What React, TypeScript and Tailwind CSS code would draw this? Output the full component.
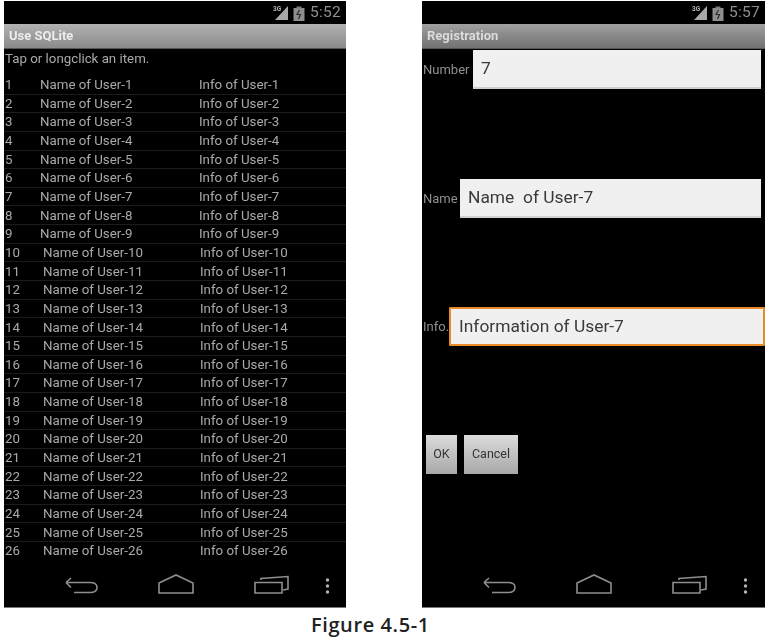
const font = "font-['Roboto',sans-serif]";

function StatusBar({ time }: { time: string }) {
  return (
    <div className="h-[23px] flex items-center justify-end pr-[5px] gap-[5px]">
      <svg width="32" height="18" viewBox="0 0 32 18">
        <text x="0" y="7" fontSize="6.500" fontWeight="700" fill="#b5b5b5" fontFamily="Roboto, sans-serif">3G</text>
        <path d="M2 16 L15 16 L15 2 Z" fill="#a8a8a8" />
        <rect x="20.500" y="4" width="11" height="13" fill="#8e8e8e" />
        <rect x="23.500" y="2.500" width="5" height="2" fill="#7c7c7c" />
        <path d="M26.500 6 L24 10.500 L27.500 10.500 L25.500 15" stroke="#2a2a2a" strokeWidth="1.200" fill="none" />
      </svg>
      <span className="text-[15.500px] leading-none text-[#8f8f8f] tracking-[0.3px]">{time}</span>
    </div>
  );
}

function TitleBar({ title, light }: { title: string; light?: boolean }) {
  return (
    <div
      className={
        light
          ? "h-[25px] bg-gradient-to-b from-[#b2b2b2] to-[#8a8a8a] border-b border-[#555] flex items-center pl-[5px] text-[13px] font-bold text-[#ececec]"
          : "h-[25px] bg-gradient-to-b from-[#a0a0a0] to-[#727272] border-b border-[#555] flex items-center pl-[5px] text-[13px] font-bold text-[#dcdcdc]"
      }
    >
      {title}
    </div>
  );
}

function NavBar() {
  return (
    <div className="mt-auto h-[38px] relative shrink-0">
      <svg width="343" height="38" viewBox="0 0 343 38" fill="none" stroke="#8e8e8e" strokeWidth="1.600">
        <path d="M62 13.500 L67 9 M62 13.500 L67 18.500 M62 13.500 L86 13.500 Q93 13.500 93 18.500 Q93 23.500 86 23.500 L70 23.500" />
        <path d="M155 14 L172 6 L189 14 L189 24 L155 24 Z" />
        <path d="M251 13.500 L278 13.500 L278 24 L251 24 Z" />
        <path d="M257 11 L257 9.500 L284 7.500 L284 20 L279 21" />
        <circle cx="323.500" cy="11" r="1.700" fill="#b5b5b5" stroke="none" />
        <circle cx="323.500" cy="17" r="1.700" fill="#b5b5b5" stroke="none" />
        <circle cx="323.500" cy="23" r="1.700" fill="#b5b5b5" stroke="none" />
      </svg>
    </div>
  );
}

function ListRow({ n }: { n: number }) {
  const two = n >= 10;
  return (
    <div className="h-[18.650px] shrink-0 flex items-center border-b border-[#1c1c1c] text-[13.300px] leading-none text-[#a9a9a9]">
      <span className={two ? "w-[39px] pl-px" : "w-[36px] pl-px"}>{n}</span>
      <span className={two ? "w-[157px]" : "w-[159px]"}>Name of User-{n}</span>
      <span>Info of User-{n}</span>
    </div>
  );
}

function Field({ label, value, labelW, top, focused }: { label: string; value: string; labelW: string; top: string; focused?: boolean }) {
  return (
    <div className={`flex items-center ${top}`}>
      <span className={`${labelW} shrink-0 text-[13px] text-[#8f8f8f] leading-none`}>{label}</span>
      <div
        className={
          focused
            ? "flex-1 h-[39px] bg-[#f0f0f0] border-2 border-[#e8892a] rounded-[1px] flex items-center pl-[8px] text-[17.400px] text-[#3a3a3a]"
            : "flex-1 mr-[4px] h-[39px] bg-[#f0f0f0] border-b-2 border-[#d0d0d0] flex items-center pl-[8px] text-[17.400px] text-[#3a3a3a]"
        }
      >
        {value}
      </div>
    </div>
  );
}

export default function App() {
  const rows = Array.from({ length: 26 }, (_, i) => i + 1);
  return (
    <div className={`w-[771px] h-[640px] bg-white overflow-hidden ${font} relative`}>
      <div className="flex pt-px pl-[4px] gap-[76px] blur-[0.4px]">
        <div className="w-[342px] h-[607px] bg-black flex flex-col border-b border-[#777]">
          <StatusBar time="5:52" />
          <TitleBar title="Use SQLite" light />
          <div className="h-[26px] pl-[1px] flex items-center text-[13.300px] text-[#a9a9a9] leading-none pb-[7px]">Tap or longclick an item.</div>
          <div className="pt-[1px] h-[485px] overflow-hidden flex flex-col">
            {rows.map((n) => (
              <ListRow key={n} n={n} />
            ))}
          </div>
          <NavBar />
        </div>
        <div className="w-[343px] h-[607px] bg-black flex flex-col border-b border-[#777]">
          <StatusBar time="5:57" />
          <TitleBar title="Registration" />
          <Field label="Number" value="7" labelW="w-[51px] pl-[1px]" top="mt-[1px]" />
          <Field label="Name" value={"Name\u00A0 of User-7"} labelW="w-[38px] pl-[1px]" top="mt-[90px]" />
          <Field label="Info." value="Information of User-7" labelW="w-[27px] pl-[1px]" top="mt-[89px]" focused />
          <div className="flex gap-[7px] pl-[4px] mt-[89px]">
            <div className="w-[31px] h-[39px] bg-gradient-to-b from-[#dcdcdc] to-[#a8a8a8] flex items-center justify-center text-[12.500px] text-[#333]">OK</div>
            <div className="w-[54px] h-[39px] bg-gradient-to-b from-[#dcdcdc] to-[#a8a8a8] flex items-center justify-center text-[12.500px] text-[#333]">Cancel</div>
          </div>
          <NavBar />
        </div>
      </div>
      <div className="mt-[5px] pl-[311px] text-[20px] tracking-[0.6px] font-['Open_Sans',sans-serif] font-semibold leading-[24px] text-[#222]">Figure 4.5-1</div>
    </div>
  );
}
